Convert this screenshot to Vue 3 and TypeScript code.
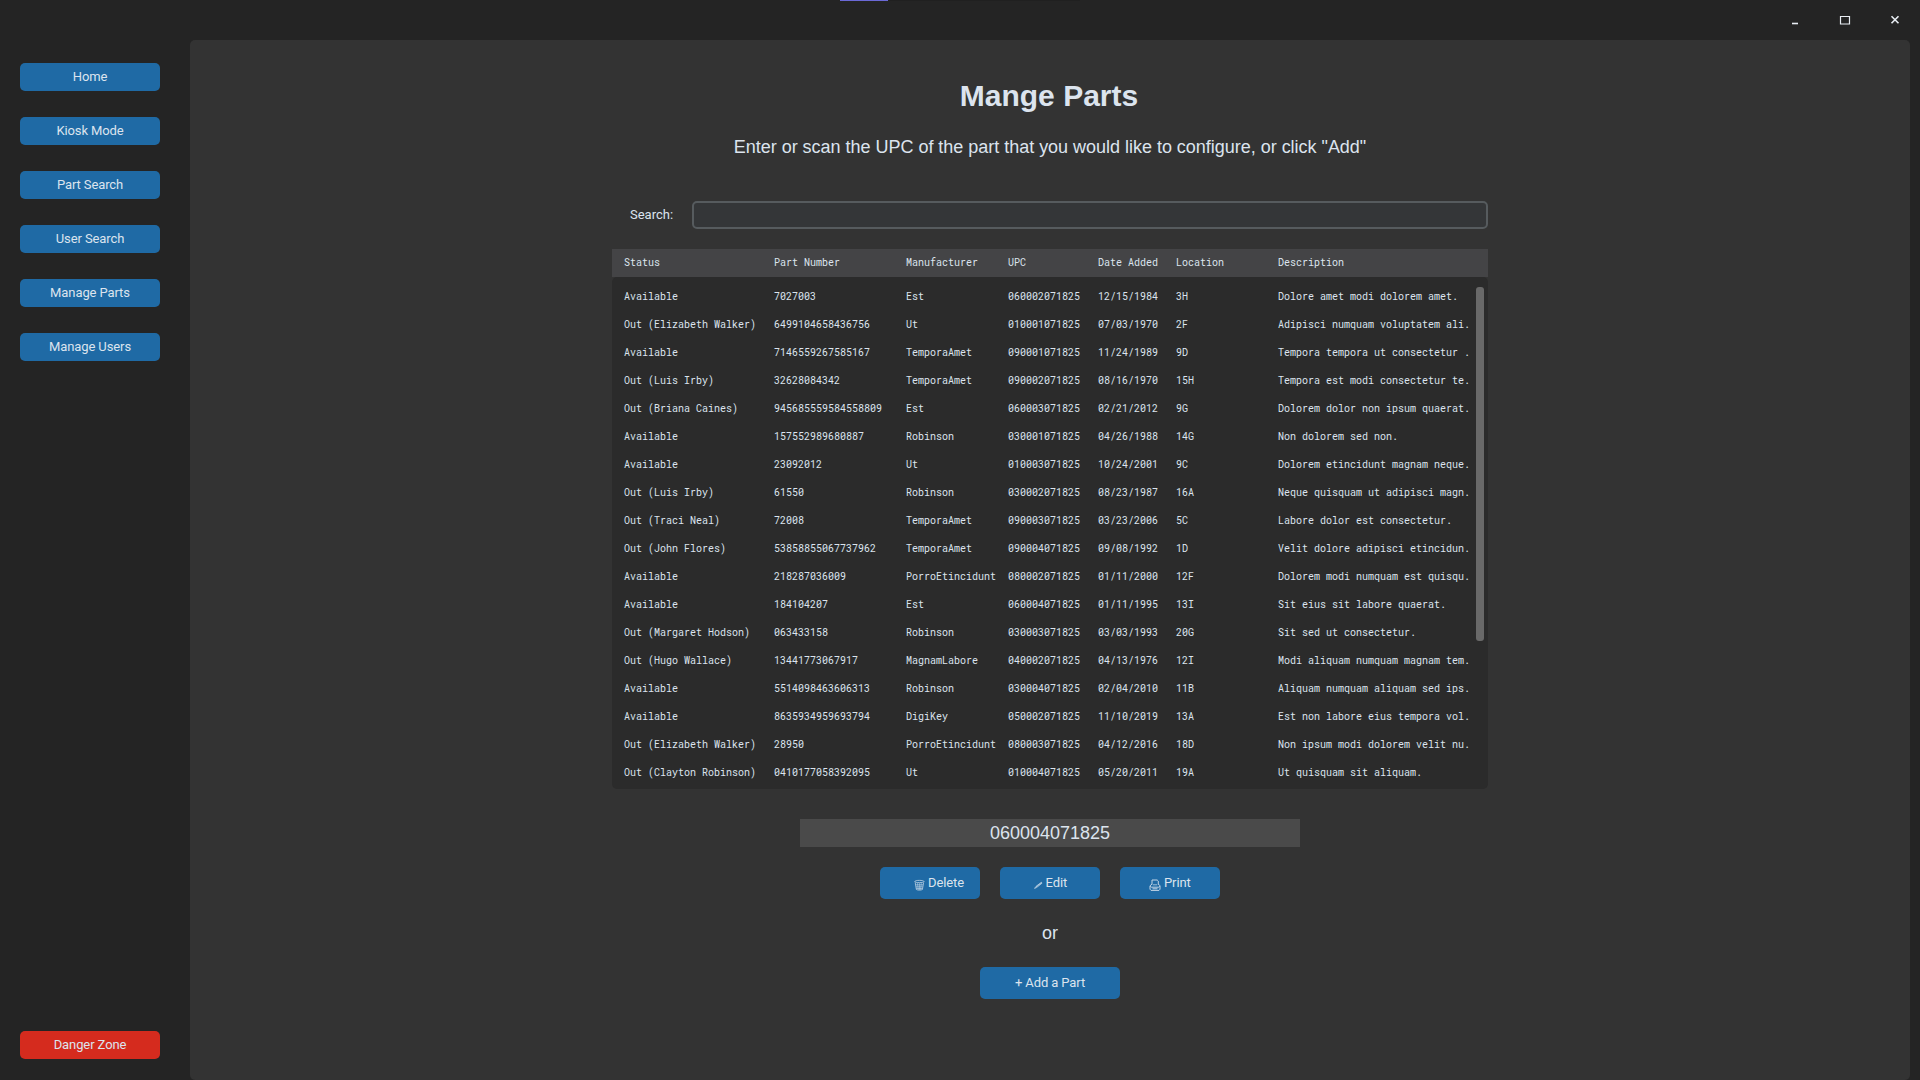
<script setup lang="ts">
interface Part {
  status: string
  number: string
  maker: string
  upc: string
  date: string
  location: string
  description: string
}

const navItems: string[] = ['Home', 'Kiosk Mode', 'Part Search', 'User Search', 'Manage Parts', 'Manage Users']
const headers: string[] = ['Status', 'Part Number', 'Manufacturer', 'UPC', 'Date Added', 'Location', 'Description']

const records: string[][] = [
  ['Available', '7027003', 'Est', '060002071825', '12/15/1984', '3H', 'Dolore amet modi dolorem amet.'],
  ['Out (Elizabeth Walker)', '6499104658436756', 'Ut', '010001071825', '07/03/1970', '2F', 'Adipisci numquam voluptatem ali.'],
  ['Available', '7146559267585167', 'TemporaAmet', '090001071825', '11/24/1989', '9D', 'Tempora tempora ut consectetur .'],
  ['Out (Luis Irby)', '32628084342', 'TemporaAmet', '090002071825', '08/16/1970', '15H', 'Tempora est modi consectetur te.'],
  ['Out (Briana Caines)', '945685559584558809', 'Est', '060003071825', '02/21/2012', '9G', 'Dolorem dolor non ipsum quaerat.'],
  ['Available', '157552989680887', 'Robinson', '030001071825', '04/26/1988', '14G', 'Non dolorem sed non.'],
  ['Available', '23092012', 'Ut', '010003071825', '10/24/2001', '9C', 'Dolorem etincidunt magnam neque.'],
  ['Out (Luis Irby)', '61550', 'Robinson', '030002071825', '08/23/1987', '16A', 'Neque quisquam ut adipisci magn.'],
  ['Out (Traci Neal)', '72008', 'TemporaAmet', '090003071825', '03/23/2006', '5C', 'Labore dolor est consectetur.'],
  ['Out (John Flores)', '53858855067737962', 'TemporaAmet', '090004071825', '09/08/1992', '1D', 'Velit dolore adipisci etincidun.'],
  ['Available', '218287036009', 'PorroEtincidunt', '080002071825', '01/11/2000', '12F', 'Dolorem modi numquam est quisqu.'],
  ['Available', '184104207', 'Est', '060004071825', '01/11/1995', '13I', 'Sit eius sit labore quaerat.'],
  ['Out (Margaret Hodson)', '063433158', 'Robinson', '030003071825', '03/03/1993', '20G', 'Sit sed ut consectetur.'],
  ['Out (Hugo Wallace)', '13441773067917', 'MagnamLabore', '040002071825', '04/13/1976', '12I', 'Modi aliquam numquam magnam tem.'],
  ['Available', '5514098463606313', 'Robinson', '030004071825', '02/04/2010', '11B', 'Aliquam numquam aliquam sed ips.'],
  ['Available', '8635934959693794', 'DigiKey', '050002071825', '11/10/2019', '13A', 'Est non labore eius tempora vol.'],
  ['Out (Elizabeth Walker)', '28950', 'PorroEtincidunt', '080003071825', '04/12/2016', '18D', 'Non ipsum modi dolorem velit nu.'],
  ['Out (Clayton Robinson)', '0410177058392095', 'Ut', '010004071825', '05/20/2011', '19A', 'Ut quisquam sit aliquam.'],
]

const parts: Part[] = records.map(([status, number, maker, upc, date, location, description]) => ({
  status, number, maker, upc, date, location, description,
}))
</script>

<template>
  <div class="window">
    <div class="loading"><span class="loading-bar"></span></div>
    <header class="titlebar">
      <button class="win-btn" aria-label="Minimize">
        <svg width="12" height="12" viewBox="0 0 12 12"><path d="M3 9.500h6" /></svg>
      </button>
      <button class="win-btn" aria-label="Maximize">
        <svg width="12" height="12" viewBox="0 0 12 12"><path d="M1.500 2.500h9v7.500h-9z" stroke-width="1.2" /></svg>
      </button>
      <button class="win-btn" aria-label="Close">
        <svg width="12" height="12" viewBox="0 0 12 12"><path d="M2.500 2.200l7 7M9.500 2.200l-7 7" /></svg>
      </button>
    </header>

    <div class="content">
      <aside class="sidebar">
        <nav class="nav">
          <button v-for="item in navItems" :key="item" class="btn nav-btn">{{ item }}</button>
        </nav>
        <button class="btn nav-btn danger">Danger Zone</button>
      </aside>

      <main class="panel">
        <h1 class="title">Mange Parts</h1>
        <p class="subtitle">Enter or scan the UPC of the part that you would like to configure, or click "Add"</p>

        <div class="search">
          <label class="search-label" for="search">Search:</label>
          <input id="search" class="search-input" type="text" />
        </div>

        <section class="table">
          <div class="row head"><span v-for="h in headers" :key="h">{{ h }}</span></div>
          <div class="body">
            <div v-for="p in parts" :key="p.upc" class="row">
              <span>{{ p.status }}</span>
              <span>{{ p.number }}</span>
              <span>{{ p.maker }}</span>
              <span>{{ p.upc }}</span>
              <span>{{ p.date }}</span>
              <span>{{ p.location }}</span>
              <span>{{ p.description }}</span>
            </div>
            <i class="thumb"></i>
          </div>
        </section>

        <div class="selected">060004071825</div>

        <div class="actions">
          <button class="btn action delete">
            <svg class="icon" width="11" height="12" viewBox="0 0 11 12">
              <path d="M.8 2.500C.8 1 10 1 10 2.500S.8 4 .8 2.500z" />
              <path d="M1.200 3.500l1.200 7c1 .8 5 .8 6 0l1.200-7" />
              <path d="M3.500 4.200l.7 6.500M5.400 4.200v6.800M7.300 4.200l-.7 6.500M1.800 5.800h7.300M2 7.800h6.600M2.300 9.500h6" stroke-width="0.6" />
            </svg>
            <span>Delete</span>
          </button>
          <button class="btn action edit">
            <svg class="icon" width="9" height="12" viewBox="0 0 9 12">
              <path d="M.6 9.400l1.300-1.900L7.300 3.300l.8.800-5.500 4.400zM1.900 8.100L7.700 3.700" />
            </svg>
            <span>Edit</span>
          </button>
          <button class="btn action print">
            <svg class="icon" width="12" height="12" viewBox="0 0 12 12">
              <path d="M3 5.500V1h5.200l1.100 1.100v3.400M3 5L1 6.800v3.400l1 1.200h8l1-1.200V6.800L9.300 5M1.200 7.300l1.200.9h7.200l1.200-.9M3.500 9.800h5" stroke-width="1" />
              <path d="M4 5.800h4.200" />
            </svg>
            <span>Print</span>
          </button>
        </div>

        <p class="or">or</p>
        <button class="btn add">+ Add a Part</button>
      </main>
    </div>
  </div>
</template>

<style>
body {
  background: #242424;
  overflow: hidden;
}
</style>

<style scoped>
.window {
  width: 1920px;
  height: 1080px;
  display: flex;
  flex-direction: column;
  background: #242424;
  color: #dce4ee;
  font-family: Roboto, sans-serif;
  font-size: 13px;
  box-sizing: border-box;
}

.loading {
  width: 240px;
  height: 1px;
  margin-left: 840px;
  background: #202020;
  display: flex;
}

.loading-bar {
  width: 48px;
  background: #6b69d6;
}

.titlebar {
  height: 39px;
  display: flex;
  justify-content: flex-end;
  align-items: flex-start;
  padding: 13px 19px 0 0;
  gap: 38px;
  box-sizing: border-box;
}

.win-btn {
  width: 12px;
  height: 12px;
  padding: 0;
  border: 0;
  background: none;
  display: flex;
}

.win-btn svg {
  fill: none;
  stroke: #e8edf3;
  stroke-width: 1.6;
}

.content {
  flex: 1;
  display: flex;
}

.sidebar {
  width: 190px;
  padding: 23px 30px 21px 20px;
  box-sizing: border-box;
  display: flex;
  flex-direction: column;
  justify-content: space-between;
}

.nav {
  display: flex;
  flex-direction: column;
  gap: 26px;
}

.btn {
  display: flex;
  align-items: center;
  justify-content: center;
  padding: 0 0 1px;
  border: 0;
  border-radius: 5px;
  background: #1f6aa5;
  color: #dce4ee;
  font: 13px/15px Roboto, sans-serif;
  letter-spacing: -0.1px;
  box-sizing: border-box;
}

.nav-btn {
  width: 140px;
  height: 28px;
}

.danger {
  background: #d52b1e;
}

.panel {
  width: 1720px;
  box-sizing: border-box;
  border-radius: 5px;
  background: #333333;
  display: flex;
  flex-direction: column;
  align-items: center;
}

.title {
  margin: 39px 2px 0 0;
  font: bold 30px/34px "Liberation Sans", Arial, sans-serif;
}

.subtitle {
  margin: 24px 0 0;
  font: 18px/20px "Liberation Sans", Arial, sans-serif;
  letter-spacing: -0.02px;
}

.search {
  width: 876px;
  height: 28px;
  margin-top: 44px;
  display: flex;
  align-items: center;
}

.search-label {
  width: 80px;
  padding: 0 0 1px 18px;
  box-sizing: border-box;
}

.search-input {
  flex: 1;
  height: 28px;
  box-sizing: border-box;
  border: 2px solid #565b5e;
  border-radius: 5px;
  background: #343638;
  color: inherit;
}

.table {
  width: 876px;
  margin-top: 20px;
  font: 10px/14px "Roboto Mono", "DejaVu Sans Mono", monospace;
}

.row {
  display: grid;
  grid-template-columns: 150px 132px 102px 90px 78px 102px 1fr;
  align-items: center;
  height: 28px;
  padding-left: 12px;
  white-space: pre;
}

.head {
  background: #444446;
}

.body {
  position: relative;
  height: 512px;
  padding-top: 6px;
  box-sizing: border-box;
  border-radius: 5px;
  background: #2b2b2b;
}

.thumb {
  position: absolute;
  top: 10px;
  right: 4px;
  width: 8px;
  height: 354px;
  border-radius: 3px;
  background: #696969;
}

.selected {
  width: 500px;
  height: 28px;
  margin-top: 30px;
  background: #4a4a4a;
  font: 18px/28px "Liberation Sans", Arial, sans-serif;
  text-align: center;
}

.actions {
  display: flex;
  gap: 20px;
  margin-top: 20px;
}

.action {
  width: 100px;
  height: 32px;
  gap: 3px;
}

.action.delete {
  justify-content: flex-start;
  padding-left: 34px;
}

.action.edit {
  justify-content: flex-start;
  padding-left: 33.5px;
}

.action.print {
  justify-content: flex-start;
  padding-left: 29px;
}

.icon {
  fill: none;
  stroke: #c3d5e6;
  stroke-width: 0.8;
  margin-top: 4px;
}

.or {
  margin: 24px 0 0;
  font: 18px/20px "Liberation Sans", Arial, sans-serif;
}

.add {
  width: 140px;
  height: 32px;
  margin-top: 24px;
}
</style>
